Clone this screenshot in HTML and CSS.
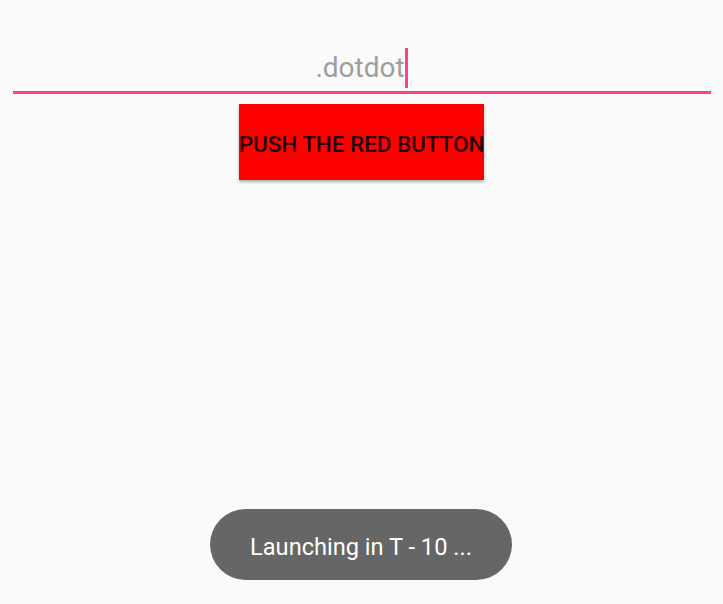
FILE: index.html
```html
<!DOCTYPE html>
<html>
<head>
<meta charset="utf-8">
<link rel="stylesheet" href="styles.css">
</head>
<body>
<div class="screen">
  <div class="field">
    <span class="value">.dotdot</span><span class="cursor"></span>
  </div>
  <div class="actions">
    <button class="red-button">PUSH THE RED BUTTON</button>
  </div>
  <div class="toast">Launching in T - 10 ...</div>
</div>
</body>
</html>
```
FILE: styles.css
```css
html, body {
  margin: 0;
  padding: 0;
  background: #fafafa;
}
.screen {
  width: 723px;
  height: 604px;
  position: relative;
  font-family: Roboto, "Noto Sans", sans-serif;
  display: flex;
  flex-direction: column;
  align-items: center;
}
.field {
  box-sizing: border-box;
  width: 698px;
  margin-top: 48px;
  height: 46px;
  border-bottom: 3px solid #ff4081;
  display: flex;
  justify-content: center;
  align-items: flex-start;
  font-size: 28px;
  line-height: 40px;
  color: #9e9e9e;
}
.value {
  display: block;
}
.cursor {
  display: block;
  width: 3px;
  height: 40px;
  background: #ff4081;
  margin-left: 0;
}
.actions {
  margin-top: 10px;
}
.red-button {
  width: 245px;
  height: 76px;
  padding: 4px 0 0 0;
  border: none;
  background: #ff0000;
  color: rgba(0, 0, 0, 0.87);
  font-family: Roboto, sans-serif;
  font-weight: 500;
  font-size: 22.6px;
  letter-spacing: -0.1px;
  box-shadow: 0 2px 3px rgba(0,0,0,0.3);
  white-space: nowrap;
  display: flex;
  align-items: center;
  justify-content: center;
}
.toast {
  position: absolute;
  left: 210px;
  top: 509px;
  width: 302px;
  height: 71px;
  box-sizing: border-box;
  padding-top: 4px;
  border-radius: 36px;
  background: #666666;
  color: #ffffff;
  font-size: 23.6px;
  display: flex;
  align-items: center;
  justify-content: center;
}
```
